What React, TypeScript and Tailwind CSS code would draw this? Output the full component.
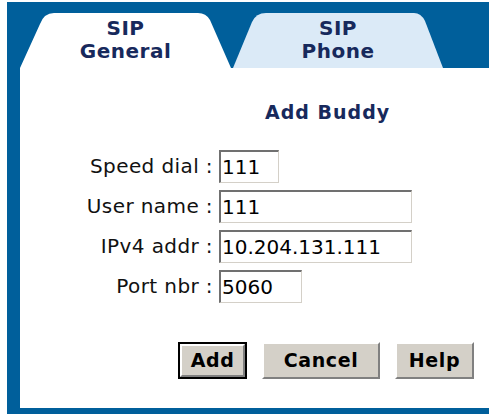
import React from "react";

const NAVY = "#17295c";

function Tab({ label1, label2, light, path, w }: { label1: string; label2: string; light?: boolean; path: string; w: string }) {
  return (
    <div className={`relative h-[55px] ${w}`}>
      <svg className="absolute inset-0" width="100%" height="55" viewBox={light ? "0 0 210 55" : "0 0 211 55"} preserveAspectRatio="none">
        <path d={path} fill={light ? "#dbeaf7" : "#ffffff"} />
      </svg>
      <div className="relative flex flex-col items-center pt-[4px] text-[20px] leading-[23px] font-bold tracking-[0.5px] text-[#17295c]">
        <span>{label1}</span>
        <span>{label2}</span>
      </div>
    </div>
  );
}

function Field({ label, value, w }: { label: string; value: string; w: string }) {
  return (
    <div className="flex items-center h-[33px]">
      <div className="w-[199px] text-right pr-[6px] text-[20px] leading-[23px] tracking-[0.4px] text-[#111]">{label}</div>
      <div
        className={`${w} h-[33px] bg-white border-t-2 border-l-2 border-r border-b border-t-[#707070] border-l-[#707070] border-r-[#d4d0c8] border-b-[#d4d0c8] pl-[1px] flex items-center text-[20px] leading-[23px] text-black`}
      >
        {value}
      </div>
    </div>
  );
}

function Btn({ children, w, def }: { children: React.ReactNode; w: string; def?: boolean }) {
  return (
    <div className={`${w} h-[37px] ${def ? "border-2 border-black" : ""}`}>
      <div className="h-full w-full bg-[#d4d0c8] border-2 border-t-white border-l-white border-r-[#808080] border-b-[#808080] flex items-center justify-center text-[19px] font-bold text-black tracking-[0.6px]">
        {children}
      </div>
    </div>
  );
}

export default function App() {
  return (
    <div className="w-[489px] h-[414px] bg-white pt-[2px] pl-[7px] font-['DejaVu_Sans',sans-serif] overflow-hidden">
      <div className="h-[412px] bg-[#005f9b] flex flex-col pb-[6px]">
        <div className="h-[66px] flex items-end pl-[13px]">
          <Tab w="w-[211px]" label1="SIP" label2="General" path="M0 55 L20 11 Q24 0 34 0 L178 0 Q186 0 190 7 L211 55 Z" />
          <div className="w-[2px]" />
          <Tab w="w-[210px]" light label1="SIP" label2="Phone" path="M0 55 L19 9 Q23 0 33 0 L181 0 Q188 0 192 8 L210 55 Z" />
        </div>
        <div className="flex-1 ml-[13px] bg-white flex flex-col">
          <div className="mt-[33px] pl-[245px] text-[19px] leading-[22px] font-bold tracking-[1px]" style={{ color: NAVY }}>
            Add Buddy
          </div>
          <div className="mt-[27px] flex flex-col gap-[7px]">
            <Field label="Speed dial :" value="111" w="w-[60px]" />
            <Field label="User name :" value="111" w="w-[193px]" />
            <Field label="IPv4 addr :" value="10.204.131.111" w="w-[193px]" />
            <Field label="Port nbr :" value="5060" w="w-[83px]" />
          </div>
          <div className="mt-[39px] pl-[158px] flex gap-[15px]">
            <Btn w="w-[69px]" def>Add</Btn>
            <Btn w="w-[118px]">Cancel</Btn>
            <Btn w="w-[79px]">Help</Btn>
          </div>
        </div>
      </div>
    </div>
  );
}
